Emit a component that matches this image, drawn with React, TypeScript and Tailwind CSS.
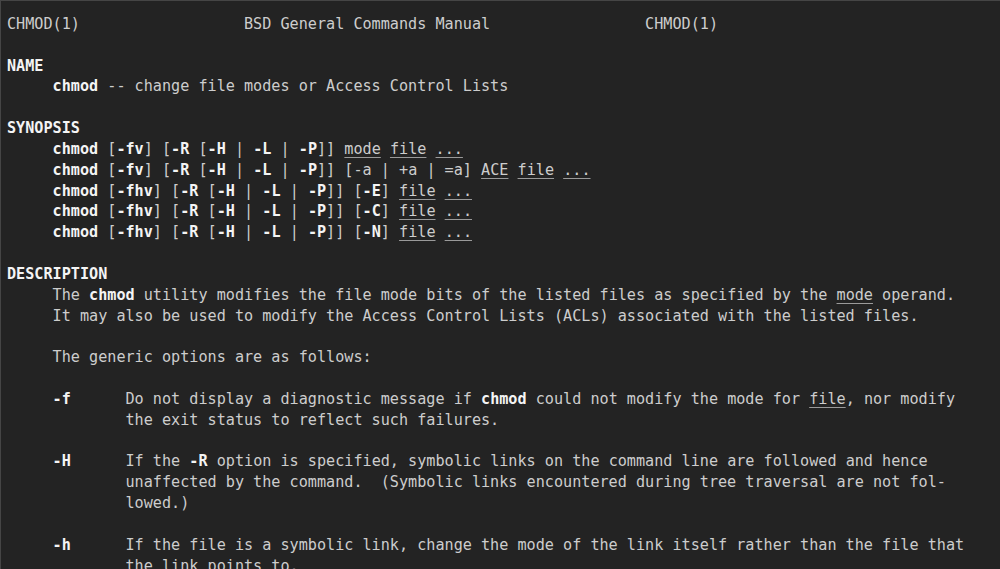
import type { ReactNode } from "react"

const B = ({ children }: { children: ReactNode }) => (
  <span className="font-bold text-[#f4f4f4]">{children}</span>
)

const U = ({ children }: { children: ReactNode }) => (
  <span className="underline decoration-[#9a9a9a] underline-offset-[3px]">{children}</span>
)

const Line = ({ children }: { children?: ReactNode }) => (
  <div className="h-[20.84px] leading-[20.84px] whitespace-pre">{children ?? " "}</div>
)

export default function App() {
  return (
    <div className="h-[569px] w-full overflow-hidden bg-[#232323] border-t border-l border-[#454545] pt-[13px] pl-[6px] text-[15.15px] text-[#cdcdcd] font-['DejaVu_Sans_Mono',monospace]">
      <Line>{"CHMOD(1)                  BSD General Commands Manual                 CHMOD(1)"}</Line>
      <Line />
      <Line><B>NAME</B></Line>
      <Line>{"     "}<B>chmod</B>{" -- change file modes or Access Control Lists"}</Line>
      <Line />
      <Line><B>SYNOPSIS</B></Line>
      <Line>
        {"     "}<B>chmod</B> [<B>-fv</B>] [<B>-R</B> [<B>-H</B> | <B>-L</B> | <B>-P</B>]] <U>mode</U> <U>file</U> <U>...</U>
      </Line>
      <Line>
        {"     "}<B>chmod</B> [<B>-fv</B>] [<B>-R</B> [<B>-H</B> | <B>-L</B> | <B>-P</B>]] [-a | +a | =a] <U>ACE</U> <U>file</U> <U>...</U>
      </Line>
      {["E", "C", "N"].map((f) => (
        <Line key={f}>
          {"     "}<B>chmod</B> [<B>-fhv</B>] [<B>-R</B> [<B>-H</B> | <B>-L</B> | <B>-P</B>]] [<B>-{f}</B>] <U>file</U> <U>...</U>
        </Line>
      ))}
      <Line />
      <Line><B>DESCRIPTION</B></Line>
      <Line>
        {"     The "}<B>chmod</B>{" utility modifies the file mode bits of the listed files as specified by the "}<U>mode</U>{" operand."}
      </Line>
      <Line>{"     It may also be used to modify the Access Control Lists (ACLs) associated with the listed files."}</Line>
      <Line />
      <Line>{"     The generic options are as follows:"}</Line>
      <Line />
      <Line>
        {"     "}<B>-f</B>{"      Do not display a diagnostic message if "}<B>chmod</B>{" could not modify the mode for "}<U>file</U>{", nor modify"}
      </Line>
      <Line>{"             the exit status to reflect such failures."}</Line>
      <Line />
      <Line>
        {"     "}<B>-H</B>{"      If the "}<B>-R</B>{" option is specified, symbolic links on the command line are followed and hence"}
      </Line>
      <Line>{"             unaffected by the command.  (Symbolic links encountered during tree traversal are not fol-"}</Line>
      <Line>{"             lowed.)"}</Line>
      <Line />
      <Line>
        {"     "}<B>-h</B>{"      If the file is a symbolic link, change the mode of the link itself rather than the file that"}
      </Line>
      <Line>{"             the link points to."}</Line>
    </div>
  )
}
